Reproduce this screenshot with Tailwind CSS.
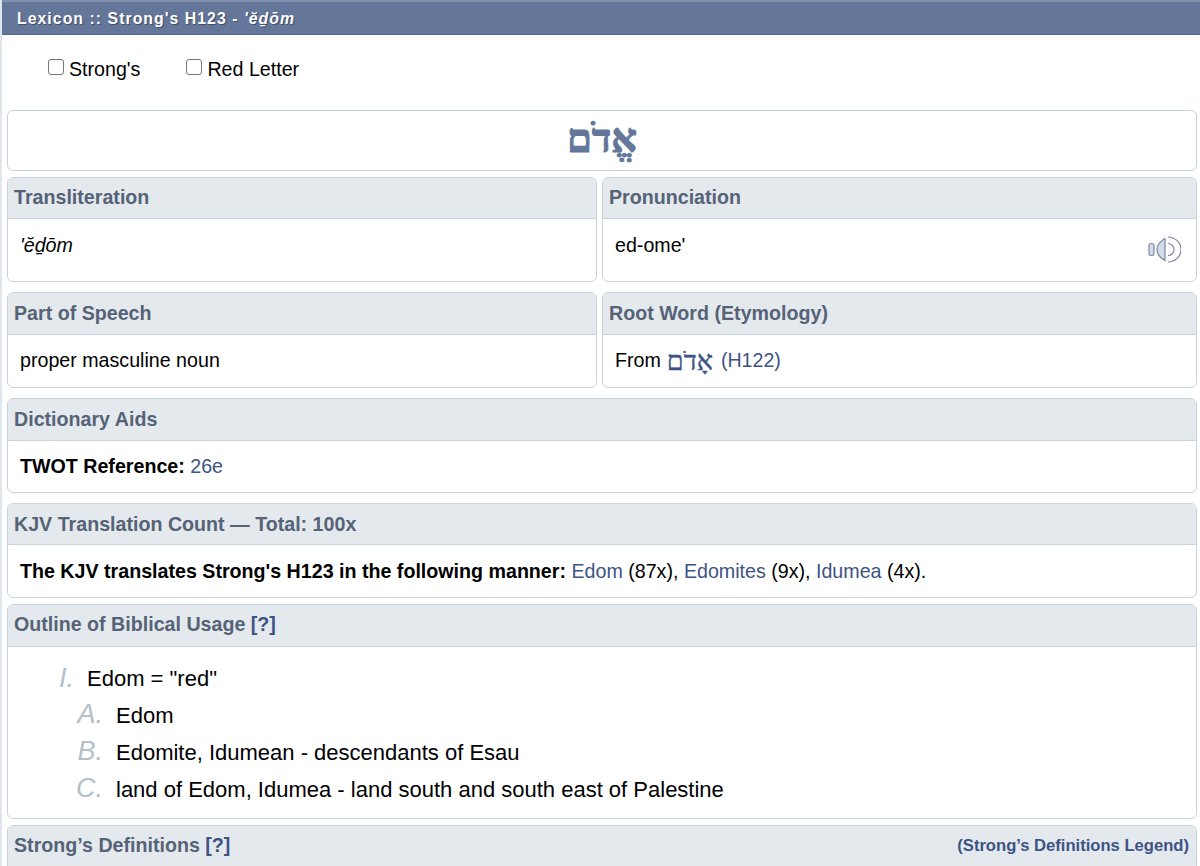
<!DOCTYPE html>
<html lang="en">
<head>
  <meta charset="UTF-8" />
  <title>Lexicon - H123</title>
  <script src="https://cdn.jsdelivr.net/npm/@tailwindcss/browser@4"></script>
</head>
<body class="bg-white text-black h-[866px] overflow-hidden font-['Liberation_Sans',Arial,sans-serif] text-[19.65px] border-l-2 border-[#dfe6ee]">
  <!-- Title bar -->
  <div class="-ml-[2px] h-[35px] bg-[#64779a] border-t-2 border-[#7f8fae] border-b border-b-[#56698c] pl-[17px] flex items-center text-white font-bold [text-shadow:1px_1px_1px_#3d4a66]">
    <span class="text-[15.8px] tracking-[1.05px] pt-[1px]">Lexicon :: Strong's H123 - <i>'ĕḏōm</i></span>
  </div>

  <!-- Options -->
  <div class="h-[75px] pl-[46px] flex items-center gap-[46px] pb-[6px]">
    <label class="flex items-center gap-[5px]"><input type="checkbox" class="w-[16px] h-[16px] m-0 -mt-[4px] appearance-none bg-white border border-[#767676] rounded-[3px]" />Strong's</label>
    <label class="flex items-center gap-[5px]"><input type="checkbox" class="w-[16px] h-[16px] m-0 -mt-[4px] appearance-none bg-white border border-[#767676] rounded-[3px]" />Red Letter</label>
  </div>

  <div class="pl-[5px] pr-[3px]">
    <!-- Hebrew word -->
    <div class="h-[61px] border border-[#c5d0e0] rounded-[6px] flex items-center justify-center">
      <span dir="rtl" lang="he" class="text-[#64779a] font-bold text-[40px] leading-none pb-[3px] [-webkit-text-stroke:1.2px_#64779a] font-['Liberation_Serif',serif]">אֱדֹם</span>
    </div>

    <div class="grid grid-cols-[590px_595px] gap-x-[5px] mt-[6px]">
      <section class="h-[105px] border border-[#c9d3de] rounded-[6px] overflow-hidden">
        <h3 class="h-[41px] bg-[#e4e9ed] border-b border-[#c9d3de] px-[6px] flex items-center font-bold text-[#566377]">Transliteration</h3>
        <p class="pl-[12px] pt-[14px] italic leading-[24px]">'ĕḏōm</p>
      </section>
      <section class="h-[105px] border border-[#c9d3de] rounded-[6px] overflow-hidden">
        <h3 class="h-[41px] bg-[#e4e9ed] border-b border-[#c9d3de] px-[6px] flex items-center font-bold text-[#566377]">Pronunciation</h3>
        <div class="pl-[12px] pr-[15px] pt-[14px] flex justify-between items-start leading-[24px]">
          <span>ed-ome'</span>
          <svg class="mt-[3px]" width="34" height="28" viewBox="0 0 34 28" fill="none" stroke="#7a88a6" stroke-width="1.2">
            <rect x="2" y="7.5" width="5" height="12" rx="2" fill="#d5dce8" />
            <path d="M10 13.5 Q10 7 18 2.5 V24.5 Q10 20 10 13.5 Z" fill="#d5dce8" />
            <path d="M21 7.5 A6 6 0 0 1 21 19.5" />
            <path d="M21 1 A13 12.5 0 0 1 21 26" />
          </svg>
        </div>
      </section>
    </div>

    <div class="grid grid-cols-[590px_595px] gap-x-[5px] mt-[10px]">
      <section class="h-[96px] border border-[#c9d3de] rounded-[6px] overflow-hidden">
        <h3 class="h-[42px] bg-[#e4e9ed] border-b border-[#c9d3de] px-[6px] flex items-center font-bold text-[#566377]">Part of Speech</h3>
        <p class="pl-[12px] pt-[12px] leading-[26px]">proper masculine noun</p>
      </section>
      <section class="h-[96px] border border-[#c9d3de] rounded-[6px] overflow-hidden">
        <h3 class="h-[42px] bg-[#e4e9ed] border-b border-[#c9d3de] px-[6px] flex items-center font-bold text-[#566377]">Root Word (Etymology)</h3>
        <p class="pl-[12px] pt-[13px] h-[39px] flex items-center gap-[6px]">From <a class="text-[#3d5385] flex items-center gap-[8px]"><span dir="rtl" lang="he" class="text-[27px] leading-[26px] h-[26px] [-webkit-text-stroke:0.4px_#3d5385] font-['Liberation_Serif',serif]">אָדֹם</span> (H122)</a></p>
      </section>
    </div>

    <section class="h-[95px] mt-[10px] border border-[#c9d3de] rounded-[6px] overflow-hidden">
      <h3 class="h-[42px] bg-[#e4e9ed] border-b border-[#c9d3de] px-[6px] flex items-center font-bold text-[#566377]">Dictionary Aids</h3>
      <p class="pl-[12px] pt-[12px] leading-[26px]"><b>TWOT Reference:</b> <a class="text-[#3d5385]">26e</a></p>
    </section>

    <section class="h-[95px] mt-[10px] border border-[#c9d3de] rounded-[6px] overflow-hidden">
      <h3 class="h-[41px] bg-[#e4e9ed] border-b border-[#c9d3de] px-[6px] pt-[1px] flex items-center font-bold text-[#566377]">KJV Translation Count — Total: 100x</h3>
      <p class="pl-[12px] pt-[13px] leading-[26px]"><b>The KJV translates Strong's H123 in the following manner:</b> <a class="text-[#3d5385]">Edom</a> (87x), <a class="text-[#3d5385]">Edomites</a> (9x), <a class="text-[#3d5385]">Idumea</a> (4x).</p>
    </section>

    <section class="h-[215px] mt-[6px] border border-[#c9d3de] rounded-[6px] overflow-hidden">
      <h3 class="h-[42px] bg-[#e4e9ed] border-b border-[#c9d3de] px-[6px] pb-[1px] flex items-center font-bold text-[#566377]">Outline of Biblical Usage&nbsp;<a class="text-[#3d5385]">[?]</a></h3>
      <ol class="pt-[13px] text-[22px]">
        <li class="h-[37px] flex items-center leading-none"><span class="w-[66px] text-right text-[#b3bfca] italic text-[27px] font-light">I.</span><span class="ml-[13px]">Edom = "red"</span></li>
        <li class="h-[37px] flex items-center leading-none"><span class="w-[95px] pb-[2px] text-right text-[#b3bfca] italic text-[27px]">A.</span><span class="ml-[13px]">Edom</span></li>
        <li class="h-[37px] flex items-center leading-none"><span class="w-[95px] pb-[2px] text-right text-[#b3bfca] italic text-[27px]">B.</span><span class="ml-[13px]">Edomite, Idumean - descendants of Esau</span></li>
        <li class="h-[37px] flex items-center leading-none"><span class="w-[95px] pb-[2px] text-right text-[#b3bfca] italic text-[27px]">C.</span><span class="ml-[13px]">land of Edom, Idumea - land south and south east of Palestine</span></li>
      </ol>
    </section>

    <section class="mt-[6px] border border-[#c9d3de] rounded-t-[6px] overflow-hidden">
      <h3 class="h-[42px] bg-[#e4e9ed] border-b border-[#c9d3de] pl-[6px] pr-[7px] pb-[1px] flex items-center justify-between font-bold text-[#566377]">
        <span>Strong’s Definitions <a class="text-[#3d5385]">[?]</a></span>
        <a class="text-[#3d5385] text-[16.6px]">(Strong’s Definitions Legend)</a>
      </h3>
    </section>
  </div>
</body>
</html>
